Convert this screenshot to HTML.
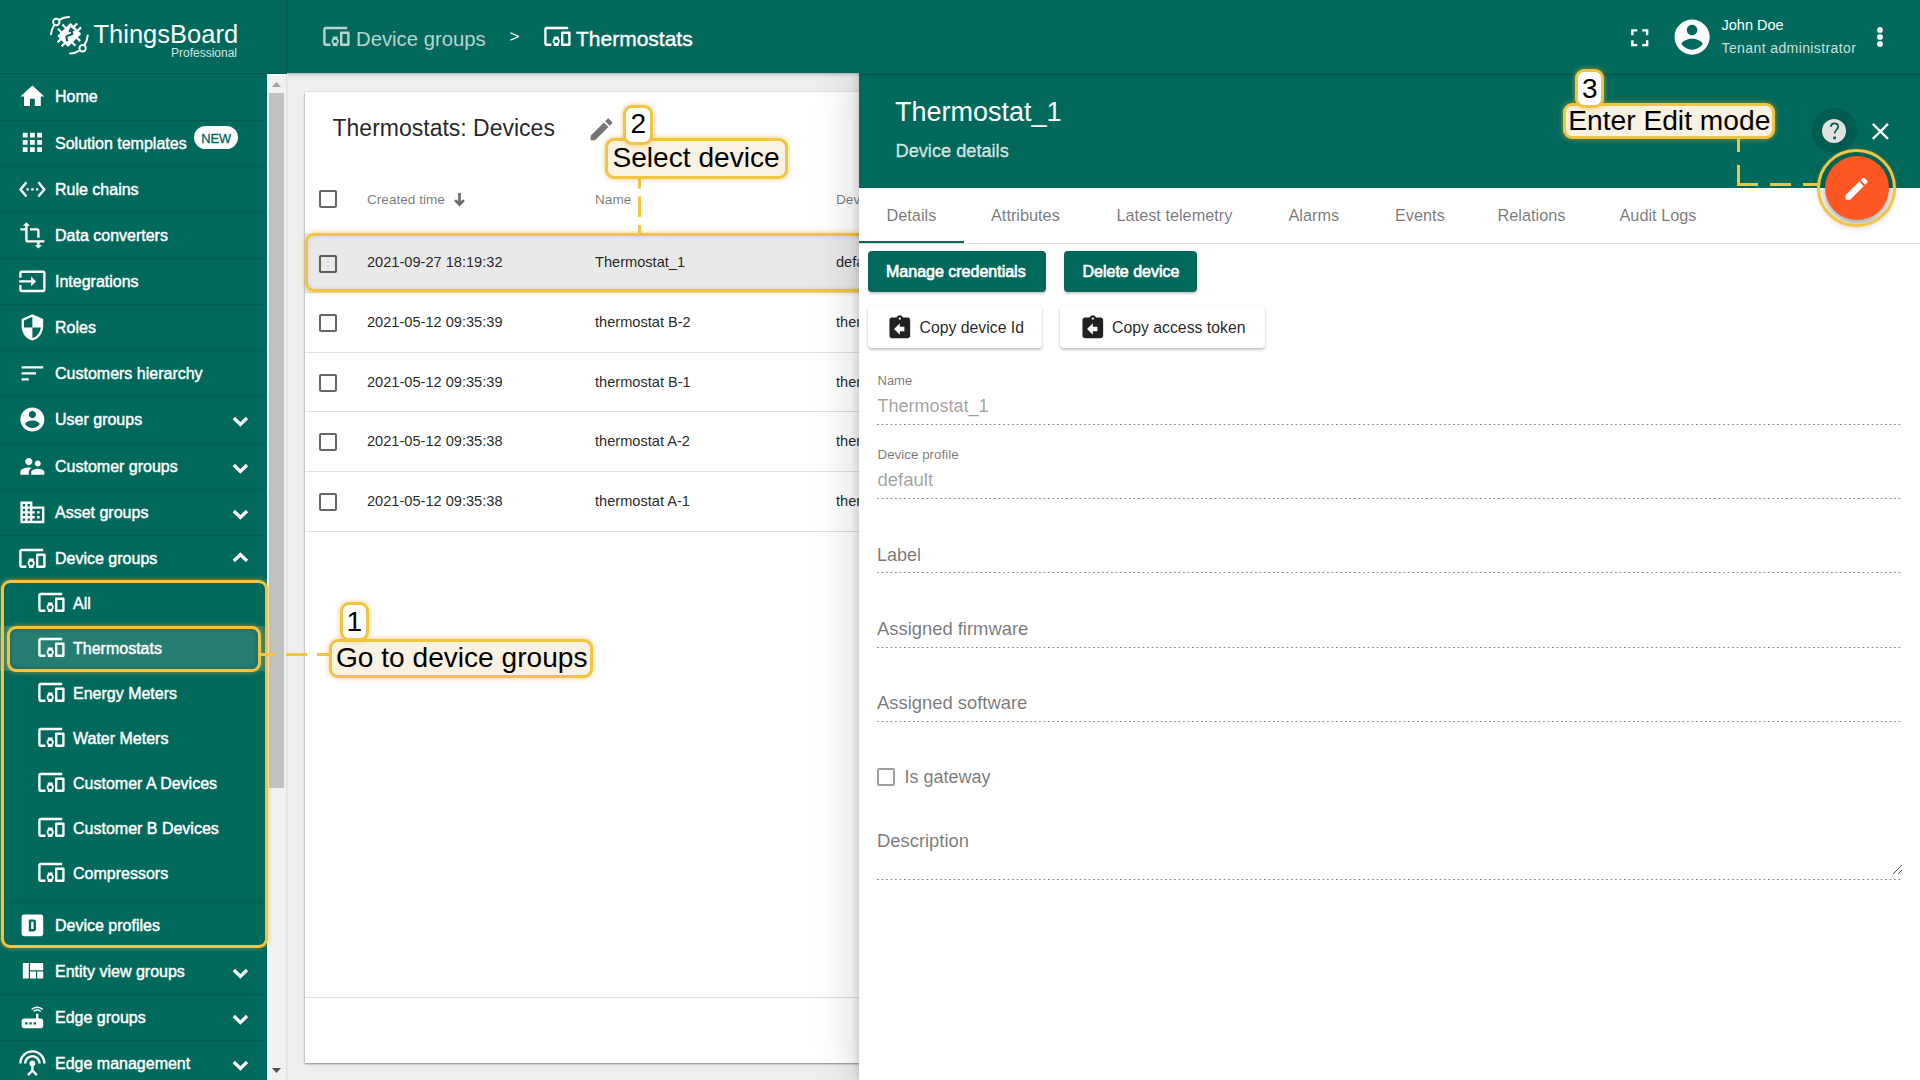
<!DOCTYPE html>
<html><head><meta charset="utf-8">
<style>
*{box-sizing:border-box;margin:0;padding:0}
html,body{width:1920px;height:1080px;overflow:hidden;background:#eeeeee;font-family:"Liberation Sans",sans-serif;position:relative}
.a{position:absolute}
svg.a{display:block;overflow:visible}
.t{position:absolute;white-space:nowrap;line-height:1}
.dot{position:absolute;height:1px;background-image:linear-gradient(to right,rgba(0,0,0,0.45) 0,rgba(0,0,0,0.45) 2px,transparent 2px);background-size:4.5px 1px}
.cb{position:absolute;width:18px;height:18px;border:2px solid rgba(0,0,0,0.6);border-radius:2px}
.hl{position:absolute;border:3px solid #f2c443;border-radius:9px;box-shadow:0 0 4px 1px rgba(242,170,40,0.45)}
.num{position:absolute;background:#fff;border:3px solid #f2c443;border-radius:9px;box-shadow:0 0 4px 1px rgba(242,170,40,0.45)}
.lab{position:absolute;background:#f9f1e1;border:3px solid #f2c443;border-radius:9px;box-shadow:0 0 4px 1px rgba(242,170,40,0.45)}
</style></head><body>

<div class="a" style="left:305px;top:92px;width:1600px;height:971px;background:#fff;box-shadow:0 1px 2px rgba(0,0,0,0.42),0 0 2px rgba(0,0,0,0.1)"></div>
<div class="t" style="left:332.5px;top:117.03px;font-size:23px;color:rgba(0,0,0,0.87)">Thermostats: Devices</div>
<svg class="a" style="left:587.4px;top:114.8px;width:28.8px;height:28.8px" viewBox="0 0 24 24"><path fill="#757575" d="M3 17.25V21h3.75L17.81 9.94l-3.75-3.75L3 17.25zM20.71 7.04c.39-.39.39-1.02 0-1.41l-2.34-2.34c-.39-.39-1.02-.39-1.41 0l-1.83 1.83 3.75 3.75 1.83-1.83z"/></svg>
<div class="cb" style="left:319px;top:190px"></div>
<div class="t" style="left:367px;top:193.29px;font-size:13.6px;color:rgba(0,0,0,0.54)">Created time</div>
<svg class="a" style="left:448px;top:188px;width:22px;height:22px" viewBox="0 0 22 22"><path d="M11.5 5V17M7.1 12.1L11.5 16.6L15.9 12.1" stroke="#6b6b6b" stroke-width="2.7" fill="none"/></svg>
<div class="t" style="left:595px;top:193.29px;font-size:13.6px;color:rgba(0,0,0,0.54)">Name</div>
<div class="t" style="left:836px;top:193.29px;font-size:13.6px;color:rgba(0,0,0,0.54)">Device profile</div>
<div class="a" style="left:305px;top:233px;width:560px;height:59px;background:#e9e9e9"></div>
<div class="cb" style="left:319px;top:254.5px"></div>
<div class="t" style="left:367px;top:255.39px;font-size:14.6px;color:rgba(0,0,0,0.87)">2021-09-27 18:19:32</div>
<div class="t" style="left:595px;top:255.39px;font-size:14.6px;color:rgba(0,0,0,0.87)">Thermostat_1</div>
<div class="t" style="left:836px;top:255.39px;font-size:14.6px;color:rgba(0,0,0,0.87)">default</div>
<div class="a" style="left:305px;top:292px;width:560px;height:1px;background:#e0e0e0"></div>
<div class="cb" style="left:319px;top:314.1px"></div>
<div class="t" style="left:367px;top:314.99px;font-size:14.6px;color:rgba(0,0,0,0.87)">2021-05-12 09:35:39</div>
<div class="t" style="left:595px;top:314.99px;font-size:14.6px;color:rgba(0,0,0,0.87)">thermostat B-2</div>
<div class="t" style="left:836px;top:314.99px;font-size:14.6px;color:rgba(0,0,0,0.87)">thermostat</div>
<div class="a" style="left:305px;top:352px;width:560px;height:1px;background:#e0e0e0"></div>
<div class="cb" style="left:319px;top:373.7px"></div>
<div class="t" style="left:367px;top:374.59px;font-size:14.6px;color:rgba(0,0,0,0.87)">2021-05-12 09:35:39</div>
<div class="t" style="left:595px;top:374.59px;font-size:14.6px;color:rgba(0,0,0,0.87)">thermostat B-1</div>
<div class="t" style="left:836px;top:374.59px;font-size:14.6px;color:rgba(0,0,0,0.87)">thermostat</div>
<div class="a" style="left:305px;top:411px;width:560px;height:1px;background:#e0e0e0"></div>
<div class="cb" style="left:319px;top:433.3px"></div>
<div class="t" style="left:367px;top:434.19px;font-size:14.6px;color:rgba(0,0,0,0.87)">2021-05-12 09:35:38</div>
<div class="t" style="left:595px;top:434.19px;font-size:14.6px;color:rgba(0,0,0,0.87)">thermostat A-2</div>
<div class="t" style="left:836px;top:434.19px;font-size:14.6px;color:rgba(0,0,0,0.87)">thermostat</div>
<div class="a" style="left:305px;top:471px;width:560px;height:1px;background:#e0e0e0"></div>
<div class="cb" style="left:319px;top:492.9px"></div>
<div class="t" style="left:367px;top:493.79px;font-size:14.6px;color:rgba(0,0,0,0.87)">2021-05-12 09:35:38</div>
<div class="t" style="left:595px;top:493.79px;font-size:14.6px;color:rgba(0,0,0,0.87)">thermostat A-1</div>
<div class="t" style="left:836px;top:493.79px;font-size:14.6px;color:rgba(0,0,0,0.87)">thermostat</div>
<div class="a" style="left:305px;top:531px;width:560px;height:1px;background:#e0e0e0"></div>
<div class="a" style="left:305px;top:997px;width:560px;height:1px;background:#e0e0e0"></div>
<div class="hl" style="left:305px;top:233px;width:600px;height:59px;box-shadow:0 0 4px 1px rgba(242,170,40,0.45),inset 0 0 4px rgba(0,0,0,0.12)"></div>
<div class="a" style="left:859px;top:73px;width:1061px;height:1007px;background:#fff;box-shadow:0 0 44px 4px rgba(0,0,0,0.15),-2px 0 8px rgba(0,0,0,0.13)"></div>
<div class="a" style="left:859px;top:73px;width:1061px;height:115px;background:#00695c"></div>
<div class="t" style="left:895px;top:99.14px;font-size:27px;color:#fff">Thermostat_1</div>
<div class="t" style="left:895.5px;top:142.19px;font-size:18.2px;color:rgba(255,255,255,0.78);-webkit-text-stroke:0.35px rgba(255,255,255,0.78)">Device details</div>
<div class="a" style="left:1811.5px;top:108px;width:45px;height:45px;border-radius:50%;background:rgba(0,0,0,0.12)"></div>
<div class="a" style="left:1822.4px;top:119px;width:24px;height:24px;border-radius:50%;background:#e2e2e2"></div>
<svg class="a" style="left:1815px;top:112px;width:40px;height:38px" viewBox="1815 112 40 38"><path d="M1830.9 127C1830.9 124.8 1832.5 123.3 1834.5 123.3C1836.6 123.3 1838.2 124.8 1838.2 126.8C1838.2 129.6 1834.6 130 1834.6 133.4" fill="none" stroke="#005a50" stroke-width="1.7"/><rect x="1833.3" y="136.6" width="2.6" height="2.6" fill="#005a50"/></svg>
<svg class="a" style="left:1865.6px;top:116.6px;width:28.8px;height:28.8px" viewBox="0 0 24 24"><path fill="#fff" d="M19 6.41L17.59 5 12 10.59 6.41 5 5 6.41 10.59 12 5 17.59 6.41 19 12 13.41 17.59 19 19 17.59 13.41 12z"/></svg>
<div class="t" style="left:886.5px;top:206.90px;font-size:16.3px;color:rgba(0,0,0,0.54)">Details</div>
<div class="t" style="left:991px;top:206.90px;font-size:16.3px;color:rgba(0,0,0,0.54)">Attributes</div>
<div class="t" style="left:1116.5px;top:206.90px;font-size:16.3px;color:rgba(0,0,0,0.54)">Latest telemetry</div>
<div class="t" style="left:1288.5px;top:206.90px;font-size:16.3px;color:rgba(0,0,0,0.54)">Alarms</div>
<div class="t" style="left:1395px;top:206.90px;font-size:16.3px;color:rgba(0,0,0,0.54)">Events</div>
<div class="t" style="left:1497.5px;top:206.90px;font-size:16.3px;color:rgba(0,0,0,0.54)">Relations</div>
<div class="t" style="left:1619.5px;top:206.90px;font-size:16.3px;color:rgba(0,0,0,0.54)">Audit Logs</div>
<div class="a" style="left:859px;top:243px;width:1061px;height:1px;background:#e0e0e0"></div>
<div class="a" style="left:859px;top:241px;width:105px;height:2px;background:#00695c"></div>
<div class="a" style="left:868px;top:251px;width:178px;height:41px;background:#00695c;border-radius:4px;box-shadow:0 2px 2px rgba(0,0,0,0.2)"></div>
<div class="t" style="left:886px;top:263.76px;font-size:16px;color:#fff;-webkit-text-stroke:0.7px #fff">Manage credentials</div>
<div class="a" style="left:1064px;top:251px;width:133px;height:41px;background:#00695c;border-radius:4px;box-shadow:0 2px 2px rgba(0,0,0,0.2)"></div>
<div class="t" style="left:1082.5px;top:263.76px;font-size:16px;color:#fff;-webkit-text-stroke:0.7px #fff">Delete device</div>
<div class="a" style="left:868px;top:306px;width:174px;height:42px;background:#fff;border-radius:4px;box-shadow:0 2px 3px rgba(0,0,0,0.22),0 0 2px rgba(0,0,0,0.1)"></div>
<svg class="a" style="left:885.7px;top:314px;width:27.6px;height:27.6px" viewBox="0 0 24 24"><path fill="#212121" d="M19 3h-4.18C14.4 1.84 13.3 1 12 1c-1.3 0-2.4.84-2.82 2H5c-1.1 0-2 .9-2 2v14c0 1.1.9 2 2 2h14c1.1 0 2-.9 2-2V5c0-1.1-.9-2-2-2zm-7 0c.55 0 1 .45 1 1s-.45 1-1 1-1-.45-1-1 .45-1 1-1zm4 12h-4v3l-5-5 5-5v3h4v4z"/></svg>
<div class="t" style="left:919.5px;top:319.63px;font-size:15.8px;color:rgba(0,0,0,0.87)">Copy device Id</div>
<div class="a" style="left:1060px;top:306px;width:205px;height:42px;background:#fff;border-radius:4px;box-shadow:0 2px 3px rgba(0,0,0,0.22),0 0 2px rgba(0,0,0,0.1)"></div>
<svg class="a" style="left:1078.8px;top:314px;width:27.6px;height:27.6px" viewBox="0 0 24 24"><path fill="#212121" d="M19 3h-4.18C14.4 1.84 13.3 1 12 1c-1.3 0-2.4.84-2.82 2H5c-1.1 0-2 .9-2 2v14c0 1.1.9 2 2 2h14c1.1 0 2-.9 2-2V5c0-1.1-.9-2-2-2zm-7 0c.55 0 1 .45 1 1s-.45 1-1 1-1-.45-1-1 .45-1 1-1zm4 12h-4v3l-5-5 5-5v3h4v4z"/></svg>
<div class="t" style="left:1112px;top:319.63px;font-size:15.8px;color:rgba(0,0,0,0.87)">Copy access token</div>
<div class="t" style="left:877.5px;top:374.40px;font-size:13px;color:rgba(0,0,0,0.54)">Name</div>
<div class="t" style="left:877.5px;top:397.46px;font-size:18px;color:rgba(0,0,0,0.38)">Thermostat_1</div>
<div class="dot" style="left:877px;top:424px;width:1026px"></div>
<div class="t" style="left:877.5px;top:448.26px;font-size:13.4px;color:rgba(0,0,0,0.54)">Device profile</div>
<div class="t" style="left:877.5px;top:471.04px;font-size:18.5px;color:rgba(0,0,0,0.38)">default</div>
<div class="dot" style="left:877px;top:498px;width:1026px"></div>
<div class="t" style="left:877px;top:545.86px;font-size:18px;color:rgba(0,0,0,0.54)">Label</div>
<div class="dot" style="left:877px;top:572px;width:1026px"></div>
<div class="t" style="left:877px;top:620.32px;font-size:18.4px;color:rgba(0,0,0,0.54)">Assigned firmware</div>
<div class="dot" style="left:877px;top:647px;width:1026px"></div>
<div class="t" style="left:877px;top:694.02px;font-size:18.4px;color:rgba(0,0,0,0.54)">Assigned software</div>
<div class="dot" style="left:877px;top:721px;width:1026px"></div>
<div class="cb" style="left:877px;top:768px;border-color:rgba(0,0,0,0.38)"></div>
<div class="t" style="left:904.5px;top:767.76px;font-size:18px;color:rgba(0,0,0,0.54)">Is gateway</div>
<div class="t" style="left:877px;top:832.42px;font-size:18.4px;color:rgba(0,0,0,0.54)">Description</div>
<div class="dot" style="left:877px;top:879px;width:1026px"></div>
<svg class="a" style="left:1890px;top:862px;width:14px;height:14px" viewBox="0 0 14 14"><path d="M3 12L12 3M8 12L12 8" stroke="#555" stroke-width="1"/></svg>
<div class="a" style="left:1825px;top:156px;width:64px;height:64px;border-radius:50%;background:#ff5722;box-shadow:0 3px 5px -1px rgba(0,0,0,0.2),0 6px 10px 0 rgba(0,0,0,0.14),0 1px 18px 0 rgba(0,0,0,0.12)"></div>
<svg class="a" style="left:1842px;top:173.6px;width:29.3px;height:29.3px" viewBox="0 0 24 24"><path fill="#fff" d="M3 17.25V21h3.75L17.81 9.94l-3.75-3.75L3 17.25zM20.71 7.04c.39-.39.39-1.02 0-1.41l-2.34-2.34c-.39-.39-1.02-.39-1.41 0l-1.83 1.83 3.75 3.75 1.83-1.83z"/></svg>
<div class="a" style="left:0px;top:0px;width:1920px;height:73px;background:#00695c;box-shadow:0 1px 4px rgba(0,0,0,0.3)"></div>
<div class="a" style="left:859px;top:73px;width:1061px;height:1px;background:#005a4f"></div>
<svg class="a" style="left:45px;top:12px;width:50px;height:48px" viewBox="0 0 50 48">
<g fill="none" stroke="#fff" stroke-width="2" stroke-linecap="round">
<path d="M24 4.9 A18 18 0 0 0 14.2 7.9"/><path d="M9 13.5 A18 18 0 0 0 6 22.3"/>
<circle cx="11.3" cy="10" r="3.2"/>
<path d="M42.7 23.5 A18.5 18.5 0 0 1 39.6 32.6"/><path d="M34.8 38.4 A18.5 18.5 0 0 1 25 41.5"/>
<circle cx="37.6" cy="36.3" r="3.2"/>
</g>
<g transform="translate(24.3 22.9) rotate(-44.3)">
<rect x="-9.35" y="-7.7" width="18.7" height="15.4" rx="1" fill="#fff"/>
<path d="M-3.9 -6V-12.3M2.4 -6V-12.3M-3.2 6V12M3.4 6V12M8 -2.6H13.6M8 2.8H13.6M-8 -2.9H-13.5M-8 2.8H-13.5" stroke="#fff" stroke-width="2.2"/>
</g>
<path d="M22.2 29.2L21.3 24.4L27.3 22L26.6 18.8" fill="none" stroke="#00695c" stroke-width="2.1" stroke-linejoin="round"/>
<path d="M24.2 19.6L25.7 16.1L28.9 18.3Z" fill="#00695c" stroke="#00695c" stroke-width="1.2" stroke-linejoin="round"/>
</svg>
<div class="t" style="left:93.5px;top:21.81px;font-size:25.5px;color:#fff">ThingsBoard</div>
<div class="t" style="right:1683px;top:46.7px;font-size:12px;color:rgba(255,255,255,0.85);line-height:1">Professional</div>
<div class="a" style="left:286px;top:0px;width:1px;height:73px;background:rgba(0,0,0,0.16)"></div>
<svg class="a" style="left:322.4px;top:21.9px;width:28.8px;height:28.8px" viewBox="0 0 24 24"><path fill="rgba(255,255,255,0.72)" d="M3 6h18V4H3c-1.1 0-2 .9-2 2v12c0 1.1.9 2 2 2h4v-2H3V6zm10 6H9v1.78c-.61.55-1 1.33-1 2.22s.39 1.67 1 2.22V20h4v-1.78c.61-.55 1-1.34 1-2.22s-.39-1.67-1-2.22V12zm-2 5.5c-.83 0-1.5-.67-1.5-1.5s.67-1.5 1.5-1.5 1.5.67 1.5 1.5-.67 1.5-1.5 1.5zM22 8h-6c-.5 0-1 .5-1 1v10c0 .5.5 1 1 1h6c.5 0 1-.5 1-1V9c0-.5-.5-1-1-1zm-1 10h-4v-8h4v8z"/></svg>
<div class="t" style="left:356px;top:29.02px;font-size:20.3px;color:rgba(255,255,255,0.72)">Device groups</div>
<div class="t" style="left:509.5px;top:28.11px;font-size:17px;color:#fff">&gt;</div>
<svg class="a" style="left:543.4px;top:21.9px;width:28.8px;height:28.8px" viewBox="0 0 24 24"><path fill="#fff" d="M3 6h18V4H3c-1.1 0-2 .9-2 2v12c0 1.1.9 2 2 2h4v-2H3V6zm10 6H9v1.78c-.61.55-1 1.33-1 2.22s.39 1.67 1 2.22V20h4v-1.78c.61-.55 1-1.34 1-2.22s-.39-1.67-1-2.22V12zm-2 5.5c-.83 0-1.5-.67-1.5-1.5s.67-1.5 1.5-1.5 1.5.67 1.5 1.5-.67 1.5-1.5 1.5zM22 8h-6c-.5 0-1 .5-1 1v10c0 .5.5 1 1 1h6c.5 0 1-.5 1-1V9c0-.5-.5-1-1-1zm-1 10h-4v-8h4v8z"/></svg>
<div class="t" style="left:576px;top:28.42px;font-size:21px;color:#fff;-webkit-text-stroke:0.4px #fff">Thermostats</div>
<svg class="a" style="left:1624.6px;top:22.6px;width:29.5px;height:29.5px" viewBox="0 0 24 24"><path fill="#fff" d="M7 14H5v5h5v-2H7v-3zm-2-4h2V7h3V5H5v5zm12 7h-3v2h5v-5h-2v3zM14 5v2h3v3h2V5h-5z"/></svg>
<svg class="a" style="left:1670.5px;top:15.5px;width:42.2px;height:42.2px" viewBox="0 0 24 24"><path fill="#fff" d="M12 2C6.48 2 2 6.48 2 12s4.48 10 10 10 10-4.48 10-10S17.52 2 12 2zm0 3c1.66 0 3 1.34 3 3s-1.34 3-3 3-3-1.34-3-3 1.34-3 3-3zm0 14.2c-2.5 0-4.71-1.28-6-3.22.03-1.99 4-3.08 6-3.08 1.99 0 5.97 1.09 6 3.08-1.29 1.94-3.5 3.22-6 3.22z"/></svg>
<div class="t" style="left:1721.5px;top:18.33px;font-size:14.5px;color:#fff">John Doe</div>
<div class="t" style="left:1721.5px;top:40.65px;font-size:14px;color:rgba(255,255,255,0.8);letter-spacing:0.4px">Tenant administrator</div>
<svg class="a" style="left:1870px;top:20px;width:20px;height:30px" viewBox="0 0 20 30"><circle cx="10" cy="9.9" r="2.9" fill="#fff"/><circle cx="10" cy="16.9" r="2.9" fill="#fff"/><circle cx="10" cy="24" r="2.9" fill="#fff"/></svg>
<div class="a" style="left:0px;top:73px;width:267px;height:1007px;background:#00695c"></div>
<div class="a" style="left:0px;top:73px;width:267px;height:1px;background:#005a4f"></div>
<div class="a" style="left:0px;top:626px;width:265px;height:45px;background:#267d72"></div>
<svg class="a" style="left:18px;top:81.5px;width:28.8px;height:28.8px" viewBox="0 0 24 24"><path fill="#fff" d="M10 20v-6h4v6h5v-8h3L12 3 2 12h3v8z"/></svg>
<div class="t" style="left:55px;top:88.76px;font-size:16px;color:#fff;-webkit-text-stroke:0.45px #fff">Home</div>
<div class="a" style="left:0px;top:120px;width:267px;height:1px;background:rgba(0,0,0,0.13)"></div>
<svg class="a" style="left:18px;top:127.9px;width:28.8px;height:28.8px" viewBox="0 0 24 24"><path fill="#fff" d="M4 8h4V4H4v4zm6 12h4v-4h-4v4zm-6 0h4v-4H4v4zm0-6h4v-4H4v4zm6 0h4v-4h-4v4zm6-10v4h4V4h-4zm-6 4h4V4h-4v4zm6 6h4v-4h-4v4zm0 6h4v-4h-4v4z"/></svg>
<div class="t" style="left:55px;top:135.76px;font-size:16px;color:#fff;-webkit-text-stroke:0.45px #fff">Solution templates</div>
<div class="a" style="left:0px;top:166px;width:267px;height:1px;background:rgba(0,0,0,0.13)"></div>
<svg class="a" style="left:18px;top:174.5px;width:28.8px;height:28.8px" viewBox="0 0 24 24"><path fill="#fff" d="M7.77 6.76L6.23 5.48.82 12l5.41 6.52 1.54-1.28L3.42 12l4.35-5.24zM7 13h2v-2H7v2zm10-2h-2v2h2v-2zm-6 2h2v-2h-2v2zm6.77-7.52l-1.54 1.28L20.58 12l-4.35 5.24 1.54 1.28L23.18 12l-5.41-6.52z"/></svg>
<div class="t" style="left:55px;top:181.76px;font-size:16px;color:#fff;-webkit-text-stroke:0.45px #fff">Rule chains</div>
<div class="a" style="left:0px;top:212px;width:267px;height:1px;background:rgba(0,0,0,0.13)"></div>
<svg class="a" style="left:18px;top:220.5px;width:28.8px;height:28.8px" viewBox="0 0 24 24"><path fill="#fff" d="M22 18v-2H8V4h2L7 1 4 4h2v2H2v2h4v8c0 1.1.9 2 2 2h8v2h-2l3 3 3-3h-2v-2h4zM10 8h6v6h2V8c0-1.1-.9-2-2-2h-6v2z"/></svg>
<div class="t" style="left:55px;top:227.76px;font-size:16px;color:#fff;-webkit-text-stroke:0.45px #fff">Data converters</div>
<div class="a" style="left:0px;top:258px;width:267px;height:1px;background:rgba(0,0,0,0.13)"></div>
<svg class="a" style="left:18px;top:266.5px;width:28.8px;height:28.8px" viewBox="0 0 24 24"><path fill="#fff" d="M21 3.01H3c-1.1 0-2 .9-2 2V9h2V4.99h18v14.03H3V15H1v4.01c0 1.1.9 1.98 2 1.98h18c1.1 0 2-.88 2-1.98v-14c0-1.11-.9-2-2-2zM11 16l4-4-4-4v3H1v2h10v3z"/></svg>
<div class="t" style="left:55px;top:273.76px;font-size:16px;color:#fff;-webkit-text-stroke:0.45px #fff">Integrations</div>
<div class="a" style="left:0px;top:304px;width:267px;height:1px;background:rgba(0,0,0,0.13)"></div>
<svg class="a" style="left:18px;top:312.5px;width:28.8px;height:28.8px" viewBox="0 0 24 24"><path fill="#fff" d="M12 1L3 5v6c0 5.55 3.84 10.74 9 12 5.16-1.26 9-6.45 9-12V5l-9-4zm0 10.99h7c-.53 4.12-3.28 7.79-7 8.94V12H5V6.3l7-3.11v8.8z"/></svg>
<div class="t" style="left:55px;top:319.76px;font-size:16px;color:#fff;-webkit-text-stroke:0.45px #fff">Roles</div>
<div class="a" style="left:0px;top:350px;width:267px;height:1px;background:rgba(0,0,0,0.13)"></div>
<svg class="a" style="left:18px;top:358.5px;width:28.8px;height:28.8px" viewBox="0 0 24 24"><path fill="#fff" d="M3 18h6v-2H3v2zM3 6v2h18V6H3zm0 7h12v-2H3v2z"/></svg>
<div class="t" style="left:55px;top:365.76px;font-size:16px;color:#fff;-webkit-text-stroke:0.45px #fff">Customers hierarchy</div>
<div class="a" style="left:0px;top:396px;width:267px;height:1px;background:rgba(0,0,0,0.13)"></div>
<svg class="a" style="left:18px;top:404.5px;width:28.8px;height:28.8px" viewBox="0 0 24 24"><path fill="#fff" d="M12 2C6.48 2 2 6.48 2 12s4.48 10 10 10 10-4.48 10-10S17.52 2 12 2zm0 3c1.66 0 3 1.34 3 3s-1.34 3-3 3-3-1.34-3-3 1.34-3 3-3zm0 14.2c-2.5 0-4.71-1.28-6-3.22.03-1.99 4-3.08 6-3.08 1.99 0 5.97 1.09 6 3.08-1.29 1.94-3.5 3.22-6 3.22z"/></svg>
<div class="t" style="left:55px;top:411.76px;font-size:16px;color:#fff;-webkit-text-stroke:0.45px #fff">User groups</div>
<svg class="a" style="left:232px;top:416px;width:17px;height:11px" viewBox="0 0 17 11"><path d="M1.8 2L8.4 8.5L15 2" fill="none" stroke="#fff" stroke-width="3.2"/></svg>
<div class="a" style="left:0px;top:443px;width:267px;height:1px;background:rgba(0,0,0,0.13)"></div>
<svg class="a" style="left:18px;top:451.5px;width:28.8px;height:28.8px" viewBox="0 0 24 24"><path fill="#fff" d="M16.5 12c1.38 0 2.49-1.12 2.49-2.5S17.88 7 16.5 7C15.12 7 14 8.12 14 9.5s1.12 2.5 2.5 2.5zM9 11c1.66 0 2.99-1.34 2.99-3S10.66 5 9 5C7.34 5 6 6.34 6 8s1.34 3 3 3zm7.5 3c-1.83 0-5.5.92-5.5 2.75V19h11v-2.25c0-1.83-3.67-2.75-5.5-2.75zM9 13c-2.33 0-7 1.17-7 3.5V19h7v-2.25c0-.85.33-2.34 2.37-3.47C10.5 13.1 9.66 13 9 13z"/></svg>
<div class="t" style="left:55px;top:458.76px;font-size:16px;color:#fff;-webkit-text-stroke:0.45px #fff">Customer groups</div>
<svg class="a" style="left:232px;top:463px;width:17px;height:11px" viewBox="0 0 17 11"><path d="M1.8 2L8.4 8.5L15 2" fill="none" stroke="#fff" stroke-width="3.2"/></svg>
<div class="a" style="left:0px;top:489px;width:267px;height:1px;background:rgba(0,0,0,0.13)"></div>
<svg class="a" style="left:18px;top:497.5px;width:28.8px;height:28.8px" viewBox="0 0 24 24"><path fill="#fff" d="M12 7V3H2v18h20V7H12zM6 19H4v-2h2v2zm0-4H4v-2h2v2zm0-4H4V9h2v2zm0-4H4V5h2v2zm4 12H8v-2h2v2zm0-4H8v-2h2v2zm0-4H8V9h2v2zm0-4H8V5h2v2zm10 12h-8v-2h2v-2h-2v-2h2v-2h-2V9h8v10zm-2-8h-2v2h2v-2zm0 4h-2v2h2v-2z"/></svg>
<div class="t" style="left:55px;top:504.76px;font-size:16px;color:#fff;-webkit-text-stroke:0.45px #fff">Asset groups</div>
<svg class="a" style="left:232px;top:509px;width:17px;height:11px" viewBox="0 0 17 11"><path d="M1.8 2L8.4 8.5L15 2" fill="none" stroke="#fff" stroke-width="3.2"/></svg>
<div class="a" style="left:0px;top:535px;width:267px;height:1px;background:rgba(0,0,0,0.13)"></div>
<svg class="a" style="left:18px;top:543.5px;width:28.8px;height:28.8px" viewBox="0 0 24 24"><path fill="#fff" d="M3 6h18V4H3c-1.1 0-2 .9-2 2v12c0 1.1.9 2 2 2h4v-2H3V6zm10 6H9v1.78c-.61.55-1 1.33-1 2.22s.39 1.67 1 2.22V20h4v-1.78c.61-.55 1-1.34 1-2.22s-.39-1.67-1-2.22V12zm-2 5.5c-.83 0-1.5-.67-1.5-1.5s.67-1.5 1.5-1.5 1.5.67 1.5 1.5-.67 1.5-1.5 1.5zM22 8h-6c-.5 0-1 .5-1 1v10c0 .5.5 1 1 1h6c.5 0 1-.5 1-1V9c0-.5-.5-1-1-1zm-1 10h-4v-8h4v8z"/></svg>
<div class="t" style="left:55px;top:550.76px;font-size:16px;color:#fff;-webkit-text-stroke:0.45px #fff">Device groups</div>
<svg class="a" style="left:232px;top:551.6px;width:17px;height:11px" viewBox="0 0 17 11"><path d="M1.8 9L8.4 2.5L15 9" fill="none" stroke="#fff" stroke-width="3.2"/></svg>
<div class="a" style="left:0px;top:902px;width:267px;height:1px;background:rgba(0,0,0,0.13)"></div>
<svg class="a" style="left:18px;top:910.5px;width:28.8px;height:28.8px" viewBox="0 0 24 24"><path fill="#fff" d="M9,7V17H13A2,2 0 0,0 15,15V9A2,2 0 0,0 13,7H9M11,9H13V15H11V9M5,3H19A2,2 0 0,1 21,5V19A2,2 0 0,1 19,21H5A2,2 0 0,1 3,19V5A2,2 0 0,1 5,3Z"/></svg>
<div class="t" style="left:55px;top:917.76px;font-size:16px;color:#fff;-webkit-text-stroke:0.45px #fff">Device profiles</div>
<div class="a" style="left:0px;top:948px;width:267px;height:1px;background:rgba(0,0,0,0.13)"></div>
<svg class="a" style="left:18px;top:956.5px;width:28.8px;height:28.8px" viewBox="0 0 24 24"><path fill="#fff" d="M10 18h5v-6h-5v6zm-6 0h5V5H4v13zm12 0h5v-6h-5v6zM10 5v6h11V5H10z"/></svg>
<div class="t" style="left:55px;top:963.76px;font-size:16px;color:#fff;-webkit-text-stroke:0.45px #fff">Entity view groups</div>
<svg class="a" style="left:232px;top:968px;width:17px;height:11px" viewBox="0 0 17 11"><path d="M1.8 2L8.4 8.5L15 2" fill="none" stroke="#fff" stroke-width="3.2"/></svg>
<div class="a" style="left:0px;top:994px;width:267px;height:1px;background:rgba(0,0,0,0.13)"></div>
<svg class="a" style="left:18px;top:1002.5px;width:28.8px;height:28.8px" viewBox="0 0 24 24"><path fill="#fff" d="M20.2 5.9l.8-.8C19.6 3.7 17.8 3 16 3s-3.6.7-5 2.1l.8.8C13 4.8 14.5 4.2 16 4.2s3 .6 4.2 1.7zm-.9.8c-.9-.9-2.1-1.4-3.3-1.4s-2.4.5-3.3 1.4l.8.8c.7-.7 1.6-1 2.5-1 .9 0 1.8.3 2.5 1l.8-.8zM19 13h-2V9h-2v4H5c-1.1 0-2 .9-2 2v4c0 1.1.9 2 2 2h14c1.1 0 2-.9 2-2v-4c0-1.1-.9-2-2-2zM8 18H6v-2h2v2zm3.5 0h-2v-2h2v2zm3.5 0h-2v-2h2v2z"/></svg>
<div class="t" style="left:55px;top:1009.76px;font-size:16px;color:#fff;-webkit-text-stroke:0.45px #fff">Edge groups</div>
<svg class="a" style="left:232px;top:1014px;width:17px;height:11px" viewBox="0 0 17 11"><path d="M1.8 2L8.4 8.5L15 2" fill="none" stroke="#fff" stroke-width="3.2"/></svg>
<div class="a" style="left:0px;top:1040px;width:267px;height:1px;background:rgba(0,0,0,0.13)"></div>
<svg class="a" style="left:18px;top:1048.5px;width:28.8px;height:28.8px" viewBox="0 0 24 24"><path fill="#fff" d="M12 5c-3.87 0-7 3.13-7 7h2c0-2.76 2.24-5 5-5s5 2.24 5 5h2c0-3.87-3.13-7-7-7zm1 9.29c.88-.39 1.5-1.26 1.5-2.29 0-1.38-1.12-2.5-2.5-2.5S9.5 10.62 9.5 12c0 1.02.62 1.9 1.5 2.29v3.3L7.59 21 9 22.41l3-3 3 3L16.41 21 13 17.59v-3.3zM12 1C5.93 1 1 5.93 1 12h2c0-4.97 4.03-9 9-9s9 4.030 9 9h2c0-6.07-4.93-11-11-11z"/></svg>
<div class="t" style="left:55px;top:1055.76px;font-size:16px;color:#fff;-webkit-text-stroke:0.45px #fff">Edge management</div>
<svg class="a" style="left:232px;top:1060px;width:17px;height:11px" viewBox="0 0 17 11"><path d="M1.8 2L8.4 8.5L15 2" fill="none" stroke="#fff" stroke-width="3.2"/></svg>
<svg class="a" style="left:36.5px;top:588.1px;width:28.8px;height:28.8px" viewBox="0 0 24 24"><path fill="#fff" d="M3 6h18V4H3c-1.1 0-2 .9-2 2v12c0 1.1.9 2 2 2h4v-2H3V6zm10 6H9v1.78c-.61.55-1 1.33-1 2.22s.39 1.67 1 2.22V20h4v-1.78c.61-.55 1-1.34 1-2.22s-.39-1.67-1-2.22V12zm-2 5.5c-.83 0-1.5-.67-1.5-1.5s.67-1.5 1.5-1.5 1.5.67 1.5 1.5-.67 1.5-1.5 1.5zM22 8h-6c-.5 0-1 .5-1 1v10c0 .5.5 1 1 1h6c.5 0 1-.5 1-1V9c0-.5-.5-1-1-1zm-1 10h-4v-8h4v8z"/></svg>
<div class="t" style="left:73px;top:595.86px;font-size:16px;color:#fff;-webkit-text-stroke:0.45px #fff">All</div>
<svg class="a" style="left:36.5px;top:633.1px;width:28.8px;height:28.8px" viewBox="0 0 24 24"><path fill="#fff" d="M3 6h18V4H3c-1.1 0-2 .9-2 2v12c0 1.1.9 2 2 2h4v-2H3V6zm10 6H9v1.78c-.61.55-1 1.33-1 2.22s.39 1.67 1 2.22V20h4v-1.78c.61-.55 1-1.34 1-2.22s-.39-1.67-1-2.22V12zm-2 5.5c-.83 0-1.5-.67-1.5-1.5s.67-1.5 1.5-1.5 1.5.67 1.5 1.5-.67 1.5-1.5 1.5zM22 8h-6c-.5 0-1 .5-1 1v10c0 .5.5 1 1 1h6c.5 0 1-.5 1-1V9c0-.5-.5-1-1-1zm-1 10h-4v-8h4v8z"/></svg>
<div class="t" style="left:73px;top:640.86px;font-size:16px;color:#fff;-webkit-text-stroke:0.45px #fff">Thermostats</div>
<svg class="a" style="left:36.5px;top:678.1px;width:28.8px;height:28.8px" viewBox="0 0 24 24"><path fill="#fff" d="M3 6h18V4H3c-1.1 0-2 .9-2 2v12c0 1.1.9 2 2 2h4v-2H3V6zm10 6H9v1.78c-.61.55-1 1.33-1 2.22s.39 1.67 1 2.22V20h4v-1.78c.61-.55 1-1.34 1-2.22s-.39-1.67-1-2.22V12zm-2 5.5c-.83 0-1.5-.67-1.5-1.5s.67-1.5 1.5-1.5 1.5.67 1.5 1.5-.67 1.5-1.5 1.5zM22 8h-6c-.5 0-1 .5-1 1v10c0 .5.5 1 1 1h6c.5 0 1-.5 1-1V9c0-.5-.5-1-1-1zm-1 10h-4v-8h4v8z"/></svg>
<div class="t" style="left:73px;top:685.86px;font-size:16px;color:#fff;-webkit-text-stroke:0.45px #fff">Energy Meters</div>
<svg class="a" style="left:36.5px;top:723.1px;width:28.8px;height:28.8px" viewBox="0 0 24 24"><path fill="#fff" d="M3 6h18V4H3c-1.1 0-2 .9-2 2v12c0 1.1.9 2 2 2h4v-2H3V6zm10 6H9v1.78c-.61.55-1 1.33-1 2.22s.39 1.67 1 2.22V20h4v-1.78c.61-.55 1-1.34 1-2.22s-.39-1.67-1-2.22V12zm-2 5.5c-.83 0-1.5-.67-1.5-1.5s.67-1.5 1.5-1.5 1.5.67 1.5 1.5-.67 1.5-1.5 1.5zM22 8h-6c-.5 0-1 .5-1 1v10c0 .5.5 1 1 1h6c.5 0 1-.5 1-1V9c0-.5-.5-1-1-1zm-1 10h-4v-8h4v8z"/></svg>
<div class="t" style="left:73px;top:730.86px;font-size:16px;color:#fff;-webkit-text-stroke:0.45px #fff">Water Meters</div>
<svg class="a" style="left:36.5px;top:768.1px;width:28.8px;height:28.8px" viewBox="0 0 24 24"><path fill="#fff" d="M3 6h18V4H3c-1.1 0-2 .9-2 2v12c0 1.1.9 2 2 2h4v-2H3V6zm10 6H9v1.78c-.61.55-1 1.33-1 2.22s.39 1.67 1 2.22V20h4v-1.78c.61-.55 1-1.34 1-2.22s-.39-1.67-1-2.22V12zm-2 5.5c-.83 0-1.5-.67-1.5-1.5s.67-1.5 1.5-1.5 1.5.67 1.5 1.5-.67 1.5-1.5 1.5zM22 8h-6c-.5 0-1 .5-1 1v10c0 .5.5 1 1 1h6c.5 0 1-.5 1-1V9c0-.5-.5-1-1-1zm-1 10h-4v-8h4v8z"/></svg>
<div class="t" style="left:73px;top:775.86px;font-size:16px;color:#fff;-webkit-text-stroke:0.45px #fff">Customer A Devices</div>
<svg class="a" style="left:36.5px;top:813.1px;width:28.8px;height:28.8px" viewBox="0 0 24 24"><path fill="#fff" d="M3 6h18V4H3c-1.1 0-2 .9-2 2v12c0 1.1.9 2 2 2h4v-2H3V6zm10 6H9v1.78c-.61.55-1 1.33-1 2.22s.39 1.67 1 2.22V20h4v-1.78c.61-.55 1-1.34 1-2.22s-.39-1.67-1-2.22V12zm-2 5.5c-.83 0-1.5-.67-1.5-1.5s.67-1.5 1.5-1.5 1.5.67 1.5 1.5-.67 1.5-1.5 1.5zM22 8h-6c-.5 0-1 .5-1 1v10c0 .5.5 1 1 1h6c.5 0 1-.5 1-1V9c0-.5-.5-1-1-1zm-1 10h-4v-8h4v8z"/></svg>
<div class="t" style="left:73px;top:820.86px;font-size:16px;color:#fff;-webkit-text-stroke:0.45px #fff">Customer B Devices</div>
<svg class="a" style="left:36.5px;top:858.1px;width:28.8px;height:28.8px" viewBox="0 0 24 24"><path fill="#fff" d="M3 6h18V4H3c-1.1 0-2 .9-2 2v12c0 1.1.9 2 2 2h4v-2H3V6zm10 6H9v1.78c-.61.55-1 1.33-1 2.22s.39 1.67 1 2.22V20h4v-1.78c.61-.55 1-1.34 1-2.22s-.39-1.67-1-2.22V12zm-2 5.5c-.83 0-1.5-.67-1.5-1.5s.67-1.5 1.5-1.5 1.5.67 1.5 1.5-.67 1.5-1.5 1.5zM22 8h-6c-.5 0-1 .5-1 1v10c0 .5.5 1 1 1h6c.5 0 1-.5 1-1V9c0-.5-.5-1-1-1zm-1 10h-4v-8h4v8z"/></svg>
<div class="t" style="left:73px;top:865.86px;font-size:16px;color:#fff;-webkit-text-stroke:0.45px #fff">Compressors</div>
<div class="a" style="left:194.2px;top:125.5px;width:43.5px;height:23.2px;border-radius:12px;background:#fff"></div>
<div class="t" style="left:201.3px;top:132.56px;font-size:12.8px;color:#00695c;-webkit-text-stroke:0.3px #00695c">NEW</div>
<div class="a" style="left:267px;top:74px;width:1px;height:1006px;background:#fafafa"></div>
<div class="a" style="left:268px;top:74px;width:18px;height:1006px;background:#f1f1f1"></div>
<div class="a" style="left:286px;top:74px;width:1px;height:1006px;background:#e2e2e2"></div>
<div class="a" style="left:287px;top:74px;width:1px;height:1006px;background:#e8e8e8"></div>
<div class="a" style="left:267px;top:73px;width:20px;height:1px;background:#005a4f"></div>
<div class="a" style="left:268px;top:74px;width:18px;height:1px;background:#fff"></div>
<div class="a" style="left:269px;top:93px;width:15px;height:695px;background:#c1c1c1"></div>
<svg class="a" style="left:268px;top:74px;width:18px;height:18px" viewBox="0 0 18 18"><path d="M4 13h9L8.5 8z" fill="#a3a3a3"/></svg>
<svg class="a" style="left:268px;top:1062px;width:18px;height:18px" viewBox="0 0 18 18"><path d="M4 6h9l-4.5 5z" fill="#505050"/></svg>
<div class="hl" style="left:1px;top:580px;width:267px;height:368px"></div>
<div class="hl" style="left:7px;top:626px;width:254px;height:46px;box-shadow:0 0 4px 1px rgba(242,170,40,0.45),inset 0 0 5px rgba(0,0,0,0.25)"></div>
<div class="a" style="left:260px;top:653px;width:16px;height:3px;background:#f2c443"></div>
<div class="a" style="left:286px;top:653px;width:20.5px;height:3px;background:#f2c443"></div>
<div class="a" style="left:317px;top:653px;width:13px;height:3px;background:#f2c443"></div>
<div class="lab" style="left:328.5px;top:638.5px;width:264px;height:39px"></div>
<div class="t" style="left:336px;top:644.11px;font-size:28.1px;color:#000">Go to device groups</div>
<div class="num" style="left:340px;top:602px;width:29px;height:39px"></div>
<div class="t" style="left:346.5px;top:607.80px;font-size:28px;color:#000">1</div>
<div class="a" style="left:638px;top:168px;width:3px;height:66px;background-image:linear-gradient(to bottom,#f2c443 0,#f2c443 20.5px,transparent 20.5px);background-size:3px 28.5px"></div>
<div class="lab" style="left:605px;top:138px;width:183px;height:41px"></div>
<div class="t" style="left:612.5px;top:144.01px;font-size:28.1px;color:#000">Select device</div>
<div class="num" style="left:623px;top:105px;width:30px;height:40px"></div>
<div class="t" style="left:630.5px;top:110.20px;font-size:28px;color:#000">2</div>
<div class="a" style="left:1737px;top:137px;width:3px;height:15px;background:#f2c443"></div>
<div class="a" style="left:1737px;top:165px;width:3px;height:21px;background:#f2c443"></div>
<div class="a" style="left:1737px;top:183px;width:21px;height:3px;background:#f2c443"></div>
<div class="a" style="left:1770px;top:183px;width:21px;height:3px;background:#f2c443"></div>
<div class="a" style="left:1803px;top:183px;width:15px;height:3px;background:#f2c443"></div>
<div class="lab" style="left:1563px;top:103px;width:212px;height:35.5px"></div>
<div class="t" style="left:1568.2px;top:106.43px;font-size:28.2px;color:#000">Enter Edit mode</div>
<div class="num" style="left:1574.5px;top:69px;width:29.5px;height:39px"></div>
<div class="t" style="left:1582px;top:75.40px;font-size:28px;color:#000">3</div>
<div class="a" style="left:1817.2px;top:148.7px;width:78.4px;height:78.4px;border-radius:50%;border:3px solid #f2c443;box-shadow:0 0 3px rgba(242,170,40,0.4)"></div>
</body></html>
